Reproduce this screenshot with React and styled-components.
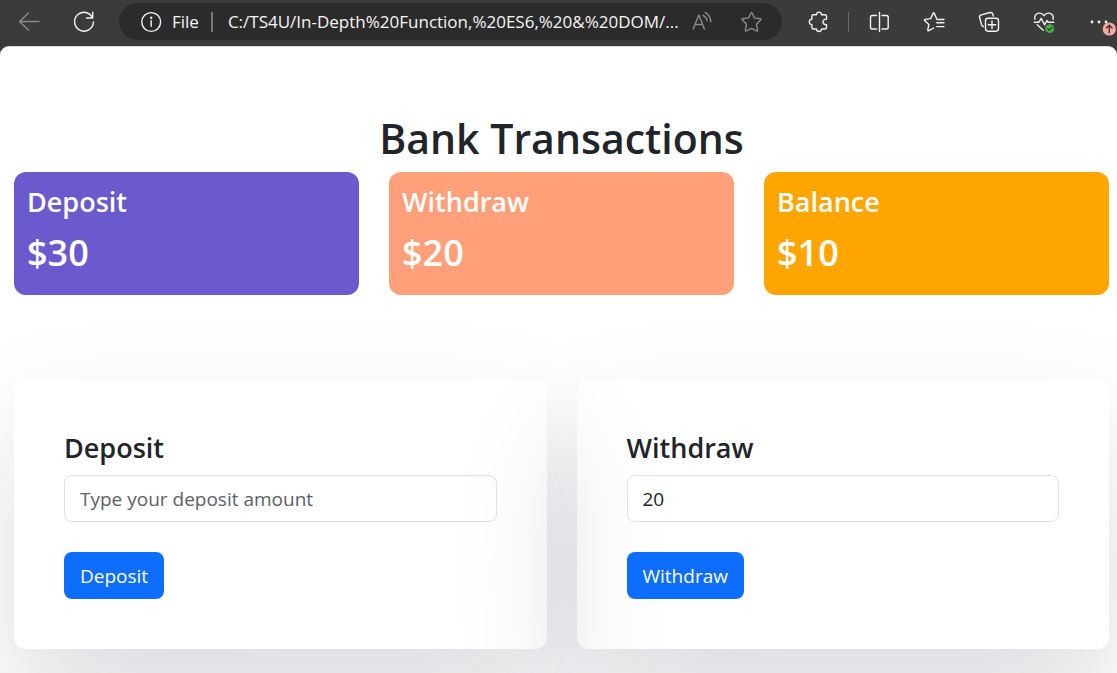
import React, { useState } from "react";
import styled, { createGlobalStyle } from "styled-components";

const GlobalStyle = createGlobalStyle`
  *, *::before, *::after { box-sizing: border-box; }
  body {
    margin: 0;
    background: #3b3b3b;
    color: #212529;
    font-family: "Open Sans", "Noto Sans", "Liberation Sans", sans-serif;
    font-size: 19px;
  }
  h1, h2, p { margin: 0; }
`;

const Shell = styled.div`
  display: flex;
  flex-direction: column;
  min-height: 100vh;
`;

const Toolbar = styled.header`
  display: flex;
  align-items: center;
  padding: 3px 7px 6px 18px;
`;

const ToolGroup = styled.div`
  display: flex;
  align-items: center;
  gap: 33px;
`;

const ToolButton = styled.button`
  display: flex;
  flex: none;
  padding: 0;
  border: 0;
  background: none;
  color: ${(p) => (p.$muted ? "#8c8c8c" : "#f2f2f2")};
`;

const Icon = styled.svg.attrs({ width: 22, height: 23, viewBox: "0 0 22 23", "aria-hidden": true })`
  display: block;
  flex: none;
  overflow: visible;
  fill: none;
  stroke: currentColor;
  stroke-width: 1.4;
  stroke-linecap: round;
  stroke-linejoin: round;
`;

const Divider = styled.span`
  flex: none;
  width: ${(p) => p.$width || 1}px;
  height: 20px;
  background: ${(p) => p.$color};
`;

const AddressBar = styled.div`
  display: flex;
  flex: 1;
  align-items: center;
  min-width: 0;
  height: 37px;
  margin: 0 25px 0 24px;
  padding: 0 19px 0 21px;
  border-radius: 19px;
  background: #2b2b2b;
  color: #f5f5f5;
  font-size: 17px;
`;

const Scheme = styled.span`
  margin: 0 12px 0 10px;
`;

const Url = styled.span`
  flex: 1;
  min-width: 0;
  margin: 0 8px 0 15px;
  overflow: hidden;
  white-space: nowrap;
`;

const AddressActions = styled.div`
  display: flex;
  gap: 27px;
`;

const Tools = styled.div`
  display: flex;
  align-items: center;
  gap: 19px;
`;

const Page = styled.main`
  flex: 1;
  overflow: hidden;
  padding: 65px 8px 24px 14px;
  border-top: 1px solid #dedede;
  border-radius: 9px 9px 0 0;
  background: #fff;
`;

const PageTitle = styled.h1`
  margin-bottom: 8px;
  font-size: 41px;
  font-weight: 600;
  line-height: 52px;
  text-align: center;
`;

const Grid = styled.div`
  display: grid;
  grid-template-columns: repeat(${(p) => p.$columns}, minmax(0, 1fr));
  gap: 30px;
`;

const Summary = styled(Grid)`
  margin-bottom: 85px;
`;

const Heading = styled.h2`
  font-size: 27px;
  font-weight: 600;
  line-height: 36px;
`;

const SummaryCard = styled.section`
  padding: 12px 13px 20px;
  border-radius: 12px;
  background: ${(p) => p.$color};
  color: #fff;
`;

const Amount = styled.p`
  margin-top: 10px;
  font-size: 36px;
  font-weight: 600;
  line-height: 45px;
`;

const FormCard = styled.form`
  padding: 50px;
  border-radius: 12px;
  box-shadow: rgba(17, 12, 46, 0.15) 0 60px 125px 0;
`;

const Label = styled.label`
  display: block;
`;

const Field = styled.input`
  display: block;
  width: 100%;
  height: 47px;
  margin: 9px 0 30px;
  padding: 0 15px;
  border: 1px solid #dee2e6;
  border-radius: 8px;
  outline: 0;
  background: #fff;
  color: #212529;
  font: inherit;
  &::placeholder { color: #5d6166; opacity: 1; }
`;

const Submit = styled.button`
  display: block;
  height: 47px;
  padding: 0 16px;
  border: 0;
  border-radius: 8px;
  background: #0d6efd;
  color: #fff;
  font: inherit;
`;

const totals = [
  { name: "Deposit", amount: 30, color: "slateblue" },
  { name: "Withdraw", amount: 20, color: "lightsalmon" },
  { name: "Balance", amount: 10, color: "orange" },
];

function BrowserBar() {
  return (
    <Toolbar>
      <ToolGroup>
        <ToolButton $muted aria-label="Back">
          <Icon><path d="M21 11.5H1.5M10.5 3L1.5 11.5L10.5 20" /></Icon>
        </ToolButton>
        <ToolButton aria-label="Refresh">
          <Icon><path d="M19.7 2.2V8H13.5M19.6 7.9A9.4 9.4 0 1 0 20.4 12" /></Icon>
        </ToolButton>
      </ToolGroup>
      <AddressBar>
        <Icon>
          <circle cx="11.2" cy="12" r="9.4" />
          <path d="M11.2 10.8v5.4" />
          <circle cx="11.2" cy="7.8" r=".5" fill="currentColor" />
        </Icon>
        <Scheme>File</Scheme>
        <Divider $width={2} $color="#777" />
        <Url>C:/TS4U/In-Depth%20Function,%20ES6,%20&amp;%20DOM/...</Url>
        <AddressActions>
          <ToolButton $muted aria-label="Read aloud">
            <Icon><path d="M1.2 19L6.8 5L12.4 19M3.1 14.5h7.4M11 5.3a8 8 0 0 1 4.3 5.6M13.2 2.3a11.6 11.6 0 0 1 5.6 9.4" /></Icon>
          </ToolButton>
          <ToolButton $muted aria-label="Add to favorites">
            <Icon><path d="M9.9 3Q10.5 2 11.1 3L13.4 7.9L19.2 8.8Q20.6 9.1 19.6 10.1L15.5 14.3L16.6 20.2Q16.7 21.5 15.6 21L10.5 18.3L5.4 21Q4.3 21.5 4.4 20.2L5.5 14.3L1.4 10.1Q.4 9.1 1.8 8.8L7.6 7.9Z" /></Icon>
          </ToolButton>
        </AddressActions>
      </AddressBar>
      <Tools>
        <ToolButton aria-label="Extensions">
          <Icon><path d="M6.2 4.8H9.5C9.2 1.2 14.8 1.2 14.5 4.8H17.8Q19.5 4.8 19.5 6.5V9.2C14.8 8.7 14.8 15.1 19.5 14.6V17.2Q19.5 19 17.8 19H14.5C14.8 22.3 9.2 22.3 9.5 19H6.2Q4.9 19 4.9 17.2V14.6C1.5 14.8 1.5 9 4.9 9.2V6.5Q4.9 4.8 6.2 4.8Z" /></Icon>
        </ToolButton>
        <Divider $color="#6b6b6b" />
        <ToolGroup>
          <ToolButton aria-label="Split screen">
            <Icon><path d="M8.5 5.5H4.3Q2.5 5.5 2.5 7.3V17.2Q2.5 19 4.3 19H8.5M14 5.5H18.4Q20.2 5.5 20.2 7.3V17.2Q20.2 19 18.4 19H14M11.5 2.5V21.5" /></Icon>
          </ToolButton>
          <ToolButton aria-label="Favorites">
            <Icon><path d="M21 9.5H14L11.3 3.4Q10.7 2.2 10.1 3.4L7.6 8.6L2 9.4Q.9 9.7 1.7 10.6L5.8 14.5L4.8 19.9Q4.6 21.3 5.8 20.7L10.8 18M13.8 12.8H21M13.8 16.6H21" /></Icon>
          </ToolButton>
          <ToolButton aria-label="Collections">
            <Icon>
              <path d="M15.3 6L14.8 4.1Q14.1 2.1 12 2.5L3.2 4.9Q1.1 5.5 1.6 7.6L3.6 14.8Q4.1 16.2 5.3 16.5" />
              <rect x="7.5" y="8.2" width="13" height="13" rx="2.6" />
              <path d="M14 11v7.4M10.3 14.7h7.4" />
            </Icon>
          </ToolButton>
          <ToolButton aria-label="Browser essentials">
            <Icon>
              <path d="M1.8 9.2C1 3 7.8 1.2 11 5.7C14.2 1.2 21 3 20.2 9.2M1.2 12.3H5.8L8.2 8.4L11.5 14.8L14 10.6L15.2 12.3H20.8M4.2 14.8L10.3 20.2" />
              <circle cx="16.7" cy="18.7" r="4.4" fill="#45ad4b" stroke="none" />
              <path d="M14.7 18.8l1.4 1.4 2.7-2.8" stroke="#234f27" />
            </Icon>
          </ToolButton>
          <ToolButton aria-label="Settings and more, update available">
            <Icon>
              <g fill="currentColor" stroke="none">
                <circle cx="4" cy="12" r="1.4" />
                <circle cx="11" cy="12" r="1.4" />
                <circle cx="18" cy="12" r="1.4" />
              </g>
              <circle cx="21.3" cy="19" r="6.6" fill="#f4a9a4" stroke="none" />
              <path d="M21.3 22.8V15.5M18.5 18l2.8-2.8 2.8 2.8" stroke="#40302f" />
            </Icon>
          </ToolButton>
        </ToolGroup>
      </Tools>
    </Toolbar>
  );
}

function TransactionForm({ name, initial }) {
  const [value, setValue] = useState(initial);
  const id = `${name.toLowerCase()}-amount`;
  return (
    <FormCard onSubmit={(e) => e.preventDefault()}>
      <Heading><Label htmlFor={id}>{name}</Label></Heading>
      <Field
        id={id}
        type="text"
        value={value}
        placeholder={`Type your ${name.toLowerCase()} amount`}
        onChange={(e) => setValue(e.target.value)}
      />
      <Submit type="submit">{name}</Submit>
    </FormCard>
  );
}

export default function App() {
  return (
    <>
      <GlobalStyle />
      <Shell>
        <BrowserBar />
        <Page>
          <PageTitle>Bank Transactions</PageTitle>
          <Summary $columns={3}>
            {totals.map((t) => (
              <SummaryCard key={t.name} $color={t.color}>
                <Heading>{t.name}</Heading>
                <Amount>${t.amount}</Amount>
              </SummaryCard>
            ))}
          </Summary>
          <Grid $columns={2}>
            <TransactionForm name="Deposit" initial="" />
            <TransactionForm name="Withdraw" initial="20" />
          </Grid>
        </Page>
      </Shell>
    </>
  );
}
